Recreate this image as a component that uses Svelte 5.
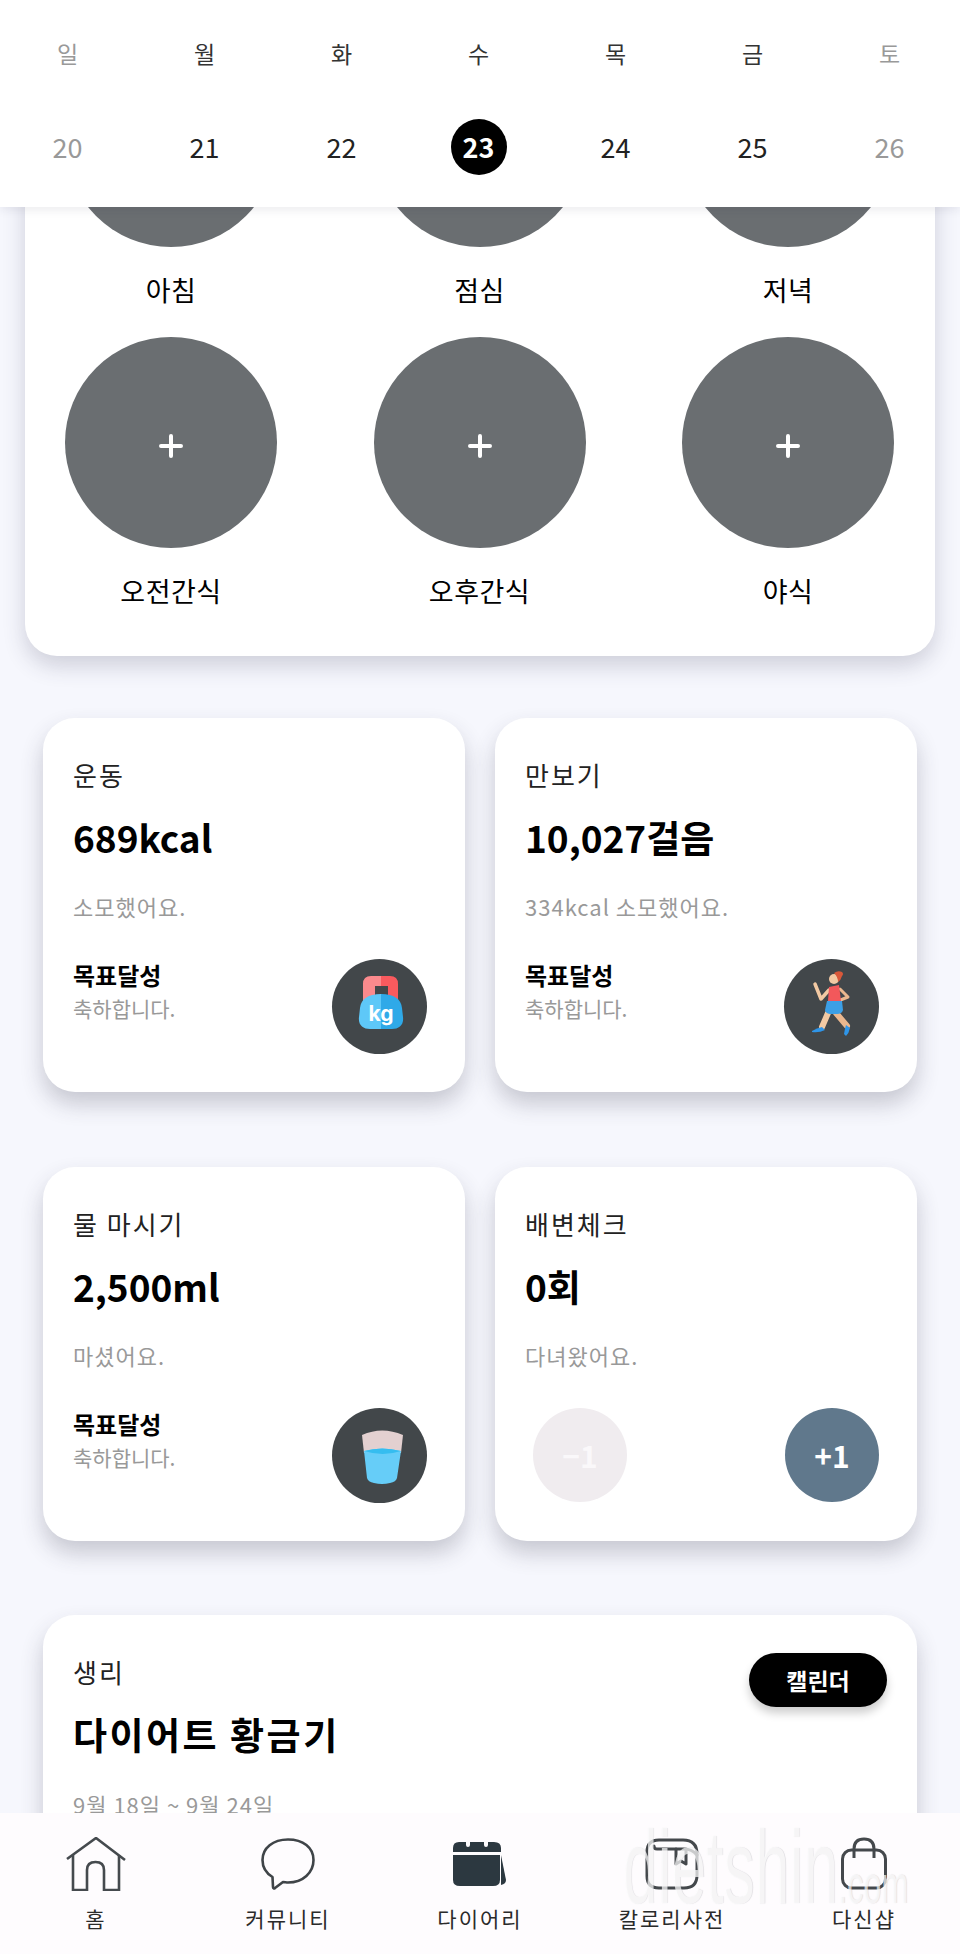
<script>
    const weekdays = [
        { label: "일", muted: true },
        { label: "월" },
        { label: "화" },
        { label: "수" },
        { label: "목" },
        { label: "금" },
        { label: "토", muted: true }
    ];
    const days = [
        { num: 20, muted: true },
        { num: 21 },
        { num: 22 },
        { num: 23, active: true },
        { num: 24 },
        { num: 25 },
        { num: 26, muted: true }
    ];
    const meals = ["아침", "점심", "저녁", "오전간식", "오후간식", "야식"];
</script>

<div class="page">
    <div class="scroll">
        <section class="meals">
            {#each meals as meal}
                <div class="meal">
                    <div class="meal_circle">
                        <svg viewBox="0 0 24 24" width="24" height="24">
                            <path d="M12 2v20M2 12h20" stroke="#fff" stroke-width="4" stroke-linecap="round" />
                        </svg>
                    </div>
                    <p class="meal_label">{meal}</p>
                </div>
            {/each}
        </section>

        <section class="grid">
            <article class="card">
                <p class="title">운동</p>
                <p class="value">689kcal</p>
                <p class="sub">소모했어요.</p>
                <div class="foot">
                    <div class="goal">
                        <p class="goal_title">목표달성</p>
                        <p class="goal_sub">축하합니다.</p>
                    </div>
                    <div class="badge">
                        <svg viewBox="0 0 95 95" width="95" height="95">
                            <path d="M49 17H39q-8 0-8 8v17h12V27h6z" fill="#fb8a8d" />
                            <path d="M49 17h9q8 0 8 8v17H56V27h-7z" fill="#f95a5e" />
                            <path d="M49 35c-13 0-20 5-21 14l-1 9c-1 8 4 12 11 12h11z" fill="#5ec8f8" />
                            <path d="M49 35c13 0 20 5 21 14l1 9c1 8-4 12-11 12H49z" fill="#2fa9e8" />
                            <text x="49" y="62" class="kg">kg</text>
                        </svg>
                    </div>
                </div>
            </article>

            <article class="card">
                <p class="title">만보기</p>
                <p class="value">10,027걸음</p>
                <p class="sub">334kcal 소모했어요.</p>
                <div class="foot">
                    <div class="goal">
                        <p class="goal_title">목표달성</p>
                        <p class="goal_sub">축하합니다.</p>
                    </div>
                    <div class="badge">
                        <svg viewBox="0 0 95 95" width="95" height="95">
                            <path d="M31 25l6 15 8-9" fill="none" stroke="#f2c9a3" stroke-width="3.500" stroke-linecap="round" stroke-linejoin="round" />
                            <path d="M56 30l8 8-10 4" fill="none" stroke="#eab78e" stroke-width="3" stroke-linecap="round" stroke-linejoin="round" />
                            <path d="M44 54l-6 14" fill="none" stroke="#f2c9a3" stroke-width="6" stroke-linecap="round" />
                            <path d="M52 54l11 13" fill="none" stroke="#eab78e" stroke-width="6" stroke-linecap="round" />
                            <path d="M45 28l10-2 2 16H44z" fill="#f2585b" />
                            <path d="M43 42h15l1 9q-1 4-6 4h-7q-5-1-5-4z" fill="#3c9fe6" />
                            <circle cx="50" cy="20" r="5" fill="#f2c9a3" />
                            <path d="M50 14q4-3 8-1 2 2 0 4-1 4-4 6 0-5-4-9z" fill="#d9583a" />
                            <path d="M28 72q5-3 10-4l3 3q-6 3-13 2z" fill="#2f95e8" />
                            <path d="M60 75q1-6 2-9l4 3q-1 5-4 8z" fill="#2f95e8" />
                        </svg>
                    </div>
                </div>
            </article>

            <article class="card">
                <p class="title">물 마시기</p>
                <p class="value">2,500ml</p>
                <p class="sub">마셨어요.</p>
                <div class="foot">
                    <div class="goal">
                        <p class="goal_title">목표달성</p>
                        <p class="goal_sub">축하합니다.</p>
                    </div>
                    <div class="badge">
                        <svg viewBox="0 0 95 95" width="95" height="95">
                            <path d="M30 27q20-9 41 0l-2 18H32z" fill="#e3d0d0" />
                            <path d="M32 43q18-5 37 0l-4 27q-1 4-7 5-8 2-16 0-6-1-7-5z" fill="#66cdf8" />
                            <path d="M32 43q18-5 37 0-18 6-37 0z" fill="#35bdf0" />
                        </svg>
                    </div>
                </div>
            </article>

            <article class="card">
                <p class="title">배변체크</p>
                <p class="value">0회</p>
                <p class="sub">다녀왔어요.</p>
                <div class="foot counter">
                    <button class="count minus">−1</button>
                    <button class="count plus">+1</button>
                </div>
            </article>

            <article class="card wide">
                <div class="wide_top">
                    <div>
                        <p class="title">생리</p>
                        <p class="value wide_value">다이어트 황금기</p>
                    </div>
                    <button class="pill">캘린더</button>
                </div>
                <p class="sub">9월 18일 ~ 9월 24일</p>
            </article>
        </section>
    </div>

    <header class="week">
        <div class="week_row labels">
            {#each weekdays as day}
                <span class:muted={day.muted}>{day.label}</span>
            {/each}
        </div>
        <div class="week_row dates">
            {#each days as day}
                <span class="date" class:muted={day.muted} class:active={day.active}>{day.num}</span>
            {/each}
        </div>
    </header>

    <nav class="tabs">
        <div class="tab">
            <svg viewBox="0 0 60 54" width="60" height="54" fill="none" stroke="#454a4e" stroke-width="2.600">
                <path d="M1 22L30 1l29 22" />
                <path d="M7 18v35h14V33q0-8 8.500-8T38 33v20h15V18" />
            </svg>
            <span>홈</span>
        </div>
        <div class="tab">
            <svg viewBox="0 0 54 52" width="54" height="52" fill="none" stroke="#3f4448" stroke-width="2.600" stroke-linejoin="round">
                <path d="M27 1.500C12 1.500 1.500 10 1.500 22c0 8 5 14 10 17l.5 10c0 1.500 1 2 2 1l8-6c2 0 3 .5 5 .5 15 0 25.500-10 25.500-22.500S42 1.500 27 1.500z" />
            </svg>
            <span>커뮤니티</span>
        </div>
        <div class="tab">
            <svg viewBox="0 0 54 54" width="54" height="54">
                <path d="M48 18l5 25q0 4-5 5z" fill="#2c3840" />
                <path d="M6 5h7v3q0 2 2 2t2-2V5h14v3q0 2 2 2t2-2V5h6q7 0 7 6v4H0v-4q0-6 6-6z" fill="#2c3840" />
                <path d="M0 18h47v25q0 6-7 6H7q-7 0-7-6z" fill="#2c3840" />
            </svg>
            <span>다이어리</span>
        </div>
        <div class="tab">
            <svg viewBox="0 0 54 52" width="54" height="52" fill="none" stroke="#44484c" stroke-width="3" stroke-linejoin="round" stroke-linecap="round">
                <path d="M14 2h24q14 0 14 14v21q0 13-13 13H14Q2 50 2 38V14Q2 2 14 2z" />
                <path d="M9 8q0 3 3 3h27q8 0 13 6" />
                <path d="M31 11v15l5-3 5 3V11" />
            </svg>
            <span>칼로리사전</span>
        </div>
        <div class="tab">
            <svg viewBox="0 0 46 54" width="46" height="54" fill="none" stroke="#44484c" stroke-width="3" stroke-linejoin="round">
                <rect x="1.500" y="13" width="43" height="38" rx="9" />
                <path d="M13 21V12q0-10 10-10t10 10v9" />
            </svg>
            <span>다신샵</span>
        </div>
        <div class="watermark">dietshin<small>.com</small></div>
    </nav>
</div>

<style>
    :global(body) {
        margin: 0;
        background: #f6f7fd;
    }

    p {
        margin: 0;
    }

    .page {
        position: relative;
        width: 960px;
        height: 1954px;
        overflow: hidden;
        background: #f6f7fd;
        font-family: "Noto Sans CJK KR", "Noto Sans", sans-serif;
        color: #000;
    }

    .scroll {
        margin-top: -40px;
        padding: 0 43px;
    }

    /* meals card */
    .meals {
        margin: 0 -18px;
        height: 696px;
        box-sizing: border-box;
        padding: 76px 41px 0 40px;
        display: grid;
        grid-template-columns: repeat(3, 212px);
        justify-content: space-between;
        grid-auto-rows: 301px;
        background: #fff;
        border-radius: 32px;
        box-shadow: 0 10px 22px rgba(50, 50, 80, 0.2);
    }

    .meal {
        display: flex;
        flex-direction: column;
        align-items: center;
    }

    .meal_circle {
        width: 212px;
        height: 211px;
        flex: none;
        border-radius: 50%;
        background: #6a6e71;
        display: flex;
        align-items: center;
        justify-content: center;
    }

    .meal_circle svg {
        margin-top: 6px;
    }

    .meal_label {
        margin-top: 23px;
        font-size: 27px;
        line-height: 40px;
        letter-spacing: 0.5px;
    }

    /* stat cards */
    .grid {
        margin-top: 62px;
        display: grid;
        grid-template-columns: 422px 422px;
        column-gap: 30px;
        row-gap: 74.5px;
    }

    .card {
        height: 374px;
        box-sizing: border-box;
        padding: 40px 31px 0 30px;
        display: flex;
        flex-direction: column;
        background: #fff;
        border-radius: 32px;
        box-shadow: 0 12px 22px rgba(50, 50, 70, 0.24);
    }

    .wide {
        grid-column: span 2;
    }

    .title {
        font-size: 26px;
        line-height: 34px;
        letter-spacing: 2px;
        color: #222;
    }

    .value {
        margin-top: 21px;
        font-size: 37px;
        line-height: 48px;
        font-weight: 700;
    }

    .sub {
        margin-top: 30px;
        font-size: 22px;
        line-height: 30px;
        letter-spacing: 1px;
        color: #999;
    }

    .foot {
        margin-top: 38px;
        display: flex;
        justify-content: space-between;
        align-items: flex-start;
    }

    .goal_title {
        font-size: 24px;
        line-height: 32px;
        font-weight: 700;
    }

    .goal_sub {
        font-size: 21px;
        line-height: 28px;
        color: #999;
        margin-top: 3px;
    }

    .badge {
        width: 95px;
        height: 95px;
        flex: none;
        margin-right: 7px;
        border-radius: 50%;
        background: #42474a;
        overflow: hidden;
    }

    .badge svg {
        display: block;
    }

    .kg {
        font-family: "Inter", "Liberation Sans", sans-serif;
        font-weight: 700;
        font-size: 21px;
        fill: #fff;
        text-anchor: middle;
    }

    .counter {
        padding: 0 7px 0 8px;
    }

    .count {
        width: 94px;
        height: 94px;
        border: 0;
        padding: 0;
        border-radius: 50%;
        font-family: "Noto Sans CJK KR", sans-serif;
        font-size: 30px;
        font-weight: 700;
        color: #fff;
    }

    .minus {
        background: #f0ecef;
        color: #faf8fa;
    }

    .plus {
        background: #60788c;
    }

    .wide_top {
        display: flex;
        justify-content: space-between;
        align-items: flex-start;
    }

    .wide_value {
        font-size: 37px;
        letter-spacing: 2.500px;
        margin-top: 21px;
    }

    .wide .sub {
        margin-top: 31px;
    }

    .pill {
        margin: -2px -1px 0 0;
        width: 138px;
        height: 54px;
        border: 0;
        border-radius: 27px;
        background: #000;
        color: #fff;
        font-family: "Noto Sans CJK KR", sans-serif;
        font-size: 23px;
        font-weight: 700;
        box-shadow: 0 6px 10px rgba(0, 0, 0, 0.2);
    }

    /* week strip */
    .week {
        position: absolute;
        top: 0;
        left: 0;
        width: 960px;
        height: 207px;
        background: #fff;
        box-shadow: 0 2px 10px rgba(40, 40, 70, 0.1);
    }

    .week_row {
        display: grid;
        grid-template-columns: repeat(7, 137px);
        justify-items: center;
        margin-left: -1px;
        color: #333;
    }

    .labels {
        padding-top: 35px;
        font-size: 23px;
        line-height: 36px;
    }

    .dates {
        padding-top: 48px;
        font-size: 27px;
        line-height: 56px;
        color: #222;
    }

    .muted {
        color: #999;
    }

    .date {
        width: 56px;
        height: 56px;
        text-align: center;
    }

    .active {
        border-radius: 50%;
        background: #000;
        color: #fff;
        font-weight: 700;
    }

    /* bottom tabs */
    .tabs {
        position: absolute;
        left: 0;
        top: 1813px;
        width: 960px;
        height: 141px;
        display: grid;
        grid-template-columns: repeat(5, 192px);
        background: #fefcfe;
    }

    .tab {
        position: relative;
        display: flex;
        flex-direction: column;
        align-items: center;
        padding-top: 24px;
        height: 117px;
        font-size: 21px;
        letter-spacing: 2px;
        color: #2a2a2a;
    }

    .tab svg {
        height: 54px;
        flex: none;
    }

    .tab span {
        position: absolute;
        top: 90px;
        line-height: 30px;
        white-space: nowrap;
    }

    .watermark {
        position: absolute;
        left: 623px;
        top: 14px;
        font-family: "Liberation Sans", sans-serif;
        font-size: 104px;
        line-height: 80px;
        color: rgba(255, 255, 255, 0.7);
        text-shadow: 1px 0 1px rgba(100, 100, 110, 0.2);
        transform: scaleX(0.6);
        transform-origin: left top;
        white-space: nowrap;
        pointer-events: none;
    }

    .watermark small {
        font-size: 54px;
    }
</style>
